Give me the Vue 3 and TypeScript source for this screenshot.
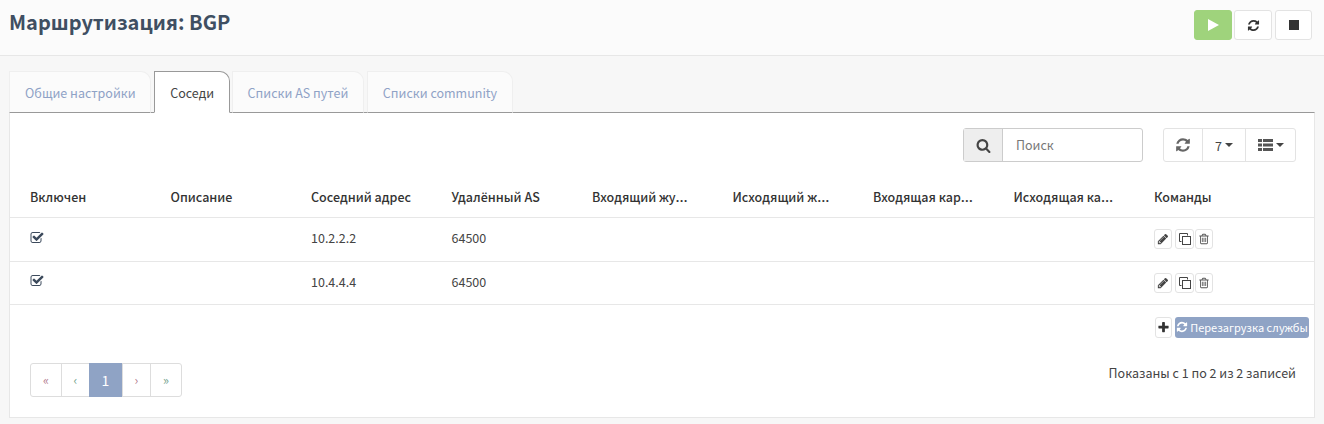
<script setup lang="ts">
const tabs = [
  { label: 'Общие настройки', active: false },
  { label: 'Соседи', active: true },
  { label: 'Списки AS путей', active: false },
  { label: 'Списки community', active: false },
]
const columns = [
  { label: 'Включен', cut: false },
  { label: 'Описание', cut: false },
  { label: 'Соседний адрес', cut: false },
  { label: 'Удалённый AS', cut: false },
  { label: 'Входящий жу', cut: true },
  { label: 'Исходящий ж', cut: true },
  { label: 'Входящая кар', cut: true },
  { label: 'Исходящая ка', cut: true },
  { label: 'Команды', cut: false },
]
const rows = [
  { address: '10.2.2.2', as: '64500' },
  { address: '10.4.4.4', as: '64500' },
]
const refresh = 'M1639 1056q0 5-1 7-64 268-268 434.5t-478 166.5q-146 0-282.5-55t-243.5-157l-129 129q-19 19-45 19t-45-19-19-45v-448q0-26 19-45t45-19h448q26 0 45 19t19 45-19 45l-137 137q71 66 161 102t187 36q134 0 250-65t186-179q11-17 53-117 8-23 30-23h192q13 0 22.5 9.5t9.5 22.5zm25-800v448q0 26-19 45t-45 19h-448q-26 0-45-19t-19-45 19-45l138-138q-148-137-349-137-134 0-250 65t-186 179q-11 17-53 117-8 23-30 23h-199q-13 0-22.5-9.5t-9.5-22.5v-7q65-268 270-434.5t480-166.5q146 0 284 55.5t245 156.5l130-129q19-19 45-19t45 19 19 45z'
const search = 'M1216 832q0-185-131.5-316.5t-316.5-131.5-316.5 131.5-131.5 316.5 131.5 316.5 316.5 131.5 316.5-131.5 131.5-316.5zm512 832q0 52-38 90t-90 38q-54 0-90-38l-343-342q-179 124-399 124-143 0-273.5-55.5t-225-150-150-225-55.5-273.5 55.5-273.5 150-225 225-150 273.5-55.5 273.5 55.5 225 150 150 225 55.5 273.5q0 220-124 399l343 343q37 37 37 90z'
const pencil = 'M491 1536l91-91-235-235-91 91v107h128v128h107zm523-928q0-22-22-22-10 0-17 7l-542 542q-7 7-7 17 0 22 22 22 10 0 17-7l542-542q7-7 7-17zm-54-192l416 416-832 832h-416v-416zm683 96q0 53-37 90l-166 166-416-416 166-165q36-38 90-38 53 0 91 38l235 234q37 39 37 91z'
const trash = 'M704 736v576q0 14-9 23t-23 9h-64q-14 0-23-9t-9-23v-576q0-14 9-23t23-9h64q14 0 23 9t9 23zm256 0v576q0 14-9 23t-23 9h-64q-14 0-23-9t-9-23v-576q0-14 9-23t23-9h64q14 0 23 9t9 23zm256 0v576q0 14-9 23t-23 9h-64q-14 0-23-9t-9-23v-576q0-14 9-23t23-9h64q14 0 23 9t9 23zm128 724v-948h-896v948q0 22 7 40.5t14.5 27 10.5 8.5h832q3 0 10.5-8.5t14.5-27 7-40.5zm-672-1076h448l-48-117q-7-9-17-11h-317q-10 2-17 11zm928 32v64q0 14-9 23t-23 9h-96v948q0 83-47 143.5t-113 60.5h-832q-66 0-113-58.5t-47-141.5v-952h-96q-14 0-23-9t-9-23v-64q0-14 9-23t23-9h309l70-167q15-37 54-63t79-26h320q40 0 79 26t54 63l70 167h309q14 0 23 9t9 23z'
const check = 'M1472 930v318q0 119-84.5 203.5t-203.5 84.5h-832q-119 0-203.5-84.5t-84.5-203.5v-832q0-119 84.5-203.5t203.5-84.5h832q63 0 117 25 15 7 18 23 3 17-9 29l-49 49q-10 10-23 10-3 0-9-2-23-6-45-6h-832q-66 0-113 47t-47 113v832q0 66 47 113t113 47h832q66 0 113-47t47-113v-254q0-13 9-22l64-64q10-10 23-10 6 0 12 3 20 8 20 29zm231-489l-814 814q-24 24-57 24t-57-24l-430-430q-24-24-24-57t24-57l110-110q24-24 57-24t57 24l263 263 647-647q24-24 57-24t57 24l110 110q24 24 24 57t-24 57z'
const plus = 'M1600 736v192q0 40-28 68t-68 28h-416v416q0 40-28 68t-68 28h-192q-40 0-68-28t-28-68v-416h-416q-40 0-68-28t-28-68v-192q0-40 28-68t68-28h416v-416q0-40 28-68t68-28h192q40 0 68 28t28 68v416h416q40 0 68 28t28 68z'
</script>

<template>
  <div class="page">
    <header class="head">
      <h1>Маршрутизация: BGP</h1>
      <div class="service">
        <button class="svc play">
          <svg width="12" height="12" viewBox="0 0 12 12"><path d="M1 0l11 6-11 6z" fill="#fff" /></svg>
        </button>
        <button class="svc">
          <svg width="13" height="13" viewBox="0 0 1792 1792"><path :d="refresh" fill="#333" /></svg>
        </button>
        <button class="svc stop">
          <svg width="10" height="10" viewBox="0 0 10 10"><rect width="10" height="10" fill="#333" /></svg>
        </button>
      </div>
    </header>

    <main class="content">
      <nav class="tabs">
        <a v-for="t in tabs" :key="t.label" class="tab" :class="{ active: t.active }">{{ t.label }}</a>
      </nav>

      <section class="panel">
        <div class="toolbar">
          <div class="searchbox">
            <span class="addon">
              <svg width="15" height="15" viewBox="0 0 1792 1792"><path :d="search" fill="#444" /></svg>
            </span>
            <span class="placeholder">Поиск</span>
          </div>
          <div class="tools">
            <span class="tool refresh">
              <svg width="16" height="16" viewBox="0 0 1792 1792"><path :d="refresh" fill="#666" /></svg>
            </span>
            <span class="tool count">7<i class="caret"></i></span>
            <span class="tool cols">
              <svg width="15" height="12" viewBox="0 0 15 12" fill="#555">
                <rect y="0" width="4" height="3" /><rect x="5" y="0" width="10" height="3" />
                <rect y="4.5" width="4" height="3" /><rect x="5" y="4.5" width="10" height="3" />
                <rect y="9" width="4" height="3" /><rect x="5" y="9" width="10" height="3" />
              </svg>
              <i class="caret"></i>
            </span>
          </div>
        </div>

        <table class="grid">
          <colgroup>
            <col v-for="n in 8" :key="n" class="c" />
            <col />
          </colgroup>
          <thead>
            <tr>
              <th v-for="c in columns" :key="c.label">{{ c.label }}<span v-if="c.cut" class="dots">…</span></th>
            </tr>
          </thead>
          <tbody>
            <tr v-for="r in rows" :key="r.address">
              <td class="checkcell">
                <svg width="14" height="14" viewBox="0 0 1792 1792"><path :d="check" fill="#3c4a5c" /></svg>
              </td>
              <td></td>
              <td>{{ r.address }}</td>
              <td>{{ r.as }}</td>
              <td></td><td></td><td></td><td></td>
              <td class="cmds">
                <span class="mini">
                  <svg width="12" height="12" viewBox="0 0 1792 1792"><path :d="pencil" fill="#444" /></svg>
                </span>
                <span class="mini clone">
                  <svg width="12" height="12" viewBox="0 0 12 12" fill="none" stroke="#444" stroke-width="1">
                    <path d="M8.5 2.5v-2h-8v8h2" /><rect x="3.5" y="3.5" width="8" height="8" />
                  </svg>
                </span>
                <span class="mini">
                  <svg width="12" height="12" viewBox="0 0 1792 1792"><path :d="trash" fill="#555" /></svg>
                </span>
              </td>
            </tr>
          </tbody>
        </table>

        <div class="actions">
          <span class="mini add">
            <svg width="13" height="13" viewBox="0 0 1792 1792"><path :d="plus" fill="#333" /></svg>
          </span>
          <span class="restart">
            <svg width="12" height="12" viewBox="0 0 1792 1792"><path :d="refresh" fill="#fff" /></svg>
            Перезагрузка службы
          </span>
        </div>

        <div class="foot">
          <ul class="pager">
            <li class="p1 red">«</li>
            <li class="p2 green">‹</li>
            <li class="cur">1</li>
            <li class="p2 red">›</li>
            <li class="p1 green">»</li>
          </ul>
          <div class="info">Показаны с 1 по 2 из 2 записей</div>
        </div>
      </section>
    </main>
  </div>
</template>

<style>
html, body { margin: 0; background: #f7f7f7; }
</style>

<style scoped>
.page {
  width: 1324px;
  height: 424px;
  overflow: hidden;
  background: #f7f7f7;
  font-family: "Noto Sans CJK SC", "Noto Sans", sans-serif;
  font-size: 12.5px;
  color: #444;
}
.head {
  height: 55px;
  box-sizing: content-box;
  background: #fbfbfb;
  border-bottom: 1px solid #e7e7e7;
  display: flex;
  justify-content: space-between;
  padding: 0 12px 0 9px;
}
h1 {
  margin: 8px 0 0;
  font-size: 20px;
  line-height: 28px;
  font-weight: 600;
  color: #3f4f62;
}
.service { display: flex; gap: 2px; margin-top: 10px; height: 30px; }
.svc {
  width: 38px;
  height: 30px;
  padding: 0;
  background: #fff;
  border: 1px solid #e3e3e3;
  border-radius: 3px;
  display: flex;
  align-items: center;
  justify-content: center;
}
.play { background: #9fd37c; border-color: #9fd37c; }
.stop { width: 37px; margin-left: 1px; }
.content { padding: 15px 9px 0; }
.tabs { display: flex; height: 41px; gap: 3px; position: relative; z-index: 1; }
.tab {
  box-sizing: border-box;
  height: 42px;
  padding: 0 14.5px 0 15px;
  display: flex;
  align-items: center;
  background: #fbfbfb;
  border: 1px solid #efefef;
  border-bottom: 1px solid #999;
  border-radius: 0 10px 0 0;
  color: #8fa2c6;
  font-size: 12.5px;
}
.tab.active {
  background: #fff;
  color: #444;
  border-color: #999;
  border-bottom-color: #fff;
  margin-right: -1px;
}
.panel {
  box-sizing: border-box;
  height: 306px;
  background: #fff;
  border: 1px solid #e7e7e7;
  border-top: 1px solid #999;
}
.toolbar {
  display: flex;
  justify-content: flex-end;
  gap: 20px;
  padding: 15px 18px 0 0;
  height: 49px;
  box-sizing: content-box;
}
.searchbox {
  width: 180px;
  height: 34px;
  box-sizing: border-box;
  display: flex;
  border: 1px solid #ccc;
  border-radius: 3px;
}
.addon {
  width: 38px;
  background: #eee;
  border-right: 1px solid #ccc;
  display: flex;
  align-items: center;
  justify-content: center;
}
.placeholder { padding-left: 13px; line-height: 32px; color: #777; font-size: 12.5px; }
.tools {
  display: flex;
  height: 34px;
  box-sizing: border-box;
  border: 1px solid #e3e3e3;
  border-radius: 3px;
}
.tool {
  display: flex;
  align-items: center;
  justify-content: center;
  gap: 3px;
  border-left: 1px solid #e3e3e3;
  color: #444;
}
.refresh { width: 38px; border-left: 0; }
.count { width: 42px; }
.cols { width: 49px; }
.caret {
  width: 0;
  height: 0;
  border-left: 4px solid transparent;
  border-right: 4px solid transparent;
  border-top: 4px solid #444;
}
.grid {
  width: 100%;
  table-layout: fixed;
  border-collapse: collapse;
  margin-top: 0;
}
.c { width: 140.5px; }
th {
  height: 40px;
  padding: 0 20px;
  box-sizing: border-box;
  font-weight: 500;
  text-align: left;
  font-size: 12.5px;
  white-space: nowrap;
  overflow: hidden;
  color: #333;
  border-bottom: 1px solid #e7e7e7;
  vertical-align: middle;
}
.dots { font-family: "Noto Sans", sans-serif; font-size: 15px; line-height: 1; }
td {
  height: 43px;
  padding: 0 20px 3px;
  font-size: 12.5px;
  color: #444;
  border-bottom: 1px solid #e7e7e7;
  box-sizing: border-box;
  vertical-align: middle;
}
tbody tr:nth-child(1) td { height: 44px; }
.checkcell svg { display: block; }
td.cmds { padding: 0 0 0 20px; white-space: nowrap; font-size: 0; }
.mini {
  display: inline-flex;
  width: 18px;
  height: 20px;
  box-sizing: border-box;
  align-items: center;
  justify-content: center;
  background: #fff;
  border: 1px solid #e3e3e3;
  border-radius: 3px;
  vertical-align: middle;
}
.clone { width: 19px; margin: 0 1px 0 3px; }
.actions {
  display: flex;
  justify-content: flex-end;
  align-items: center;
  gap: 3px;
  padding: 12px 5px 0 0;
}
.add { width: 17px; height: 21px; }
.restart {
  height: 21px;
  width: 134px;
  box-sizing: border-box;
  display: inline-flex;
  align-items: center;
  justify-content: center;
  gap: 2px;
  background: #8fa3c5;
  border-radius: 3px;
  color: #fff;
  font-size: 11px;
}
.foot {
  display: flex;
  justify-content: space-between;
  padding: 25px 18px 0 20px;
}
.pager {
  list-style: none;
  margin: 0;
  padding: 0;
  display: flex;
  height: 34px;
  box-sizing: border-box;
  border: 1px solid #ddd;
  border-radius: 3px;
}
.pager li {
  display: flex;
  align-items: center;
  justify-content: center;
  border-left: 1px solid #ddd;
  font-size: 12.5px;
  box-sizing: border-box;
}
.pager .p1 { width: 31px; }
.pager .p2 { width: 28px; }
.pager li:first-child { border-left: 0; width: 30px; }
.pager .red { color: #b0788a; }
.pager .green { color: #6fa08a; }
.pager .cur {
  width: 33px;
  background: #8fa3c5;
  color: #fff;
  border-left: 0;
  margin: -1px 0;
  font-size: 14px;
}
.info { font-size: 12.5px; color: #444; line-height: 20px; }
</style>
